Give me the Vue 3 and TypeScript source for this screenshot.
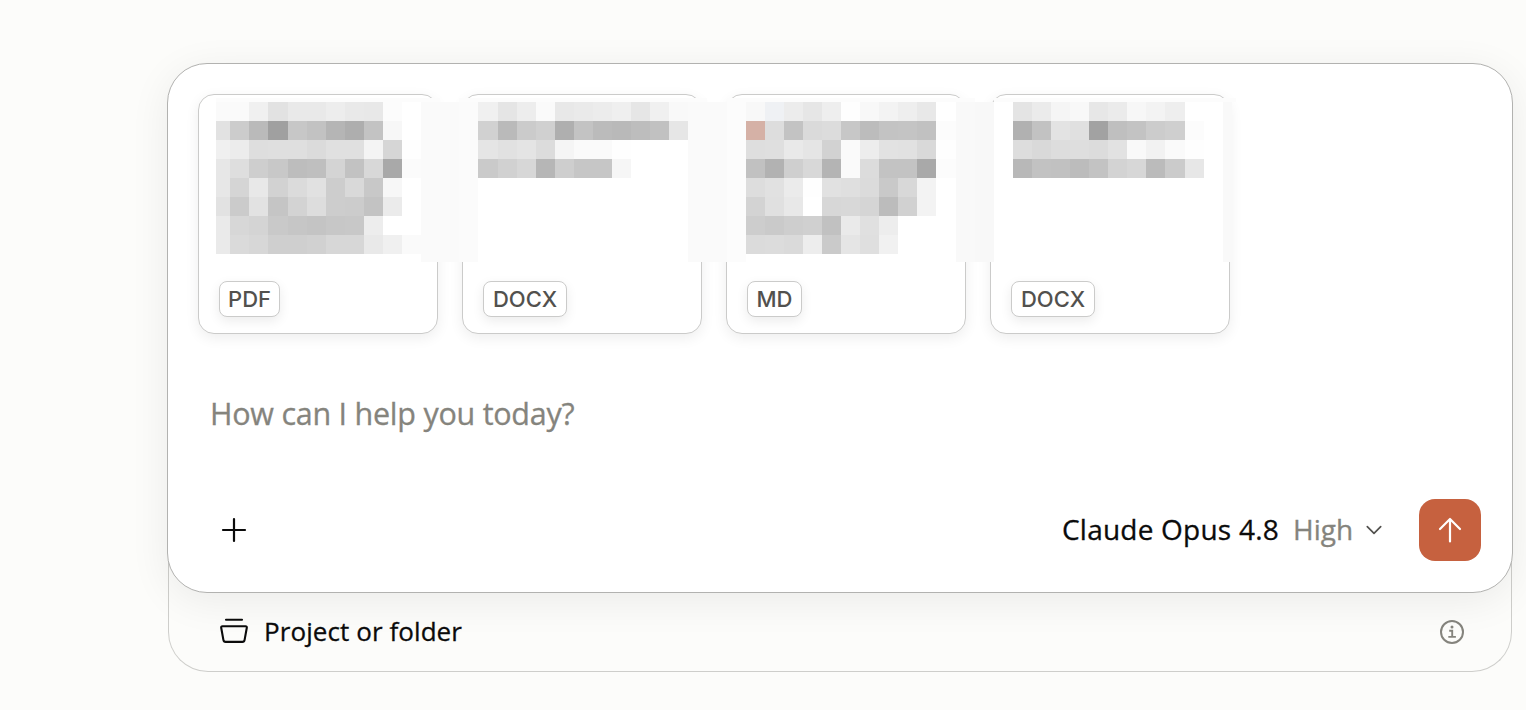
<script setup lang="ts">
interface Mosaic {
  edges: number[]
  rows: string[]
}

interface Cell {
  x: number
  y: number
  w: number
  h: number
  fill: string
}

const attachments: string[] = ['PDF', 'DOCX', 'MD', 'DOCX']

const rowEdges = [4, 23, 42, 61, 80, 99, 118, 137, 156]

const mosaics: Mosaic[] = [
  {
    edges: [18, 32, 51, 70, 90, 109, 128, 147, 166, 185, 204, 223],
    rows: [
      'fa fa f0 e2 e9 e9 ed e9 e8 fc ff',
      'e2 cc ba a0 c7 c2 b5 ae c3 f7 ff',
      'f0 ec de df df db e0 e0 f4 d6 fe',
      'e7 de ce c8 bd bf d4 c2 d8 a9 fb',
      'e7 d5 e8 d2 db e1 cd d9 c8 f7 ff',
      'e2 cb e2 c5 d3 dd cd cc c3 eb ff',
      'ea d7 d4 c9 c6 c4 c7 c8 ed ff ff',
      'ea da d7 cf cf d1 d7 d7 e9 f0 fa',
    ],
  },
  {
    edges: [280, 300, 319, 338, 357, 376, 395, 414, 433, 452, 471, 490],
    rows: [
      'f0 e5 ed fa e8 ea ec ef e6 f0 f9',
      'd1 ba cb d0 af c3 bb b9 bd c1 e6',
      'e5 e1 e4 dc f5 fa fa fe ff ff ff',
      'ca d1 d7 b6 ce c6 c6 f6 ff ff ff',
    ],
  },
  {
    edges: [548, 567, 586, 605, 624, 643, 662, 681, 700, 719, 738, 758],
    rows: [
      'f8 eff1f4 ec e6 ee fe f8 f3 ee e8 ff',
      'd5b1a6 dd c3 da dc c7 bc c3 c4 c1 fc',
      'de df e9 e5 d2 fa ed e2 e1 d9 fe',
      'c1 b2 cf d8 b4 fa dc c3 c3 a9 fc',
      'dd e1 eb fe e1 df db c9 d8 f3 ff',
      'd3 e0 e8 ff d7 d8 d5 bc d1 f3 ff',
      'cd ca ce d0 c1 ea e0 ed ff ff ff',
      'db dc da ed ca e5 df f1 ff ff ff',
    ],
  },
  {
    edges: [815, 834, 853, 872, 891, 910, 929, 948, 967, 987, 1006, 1025],
    rows: [
      'e4 eb f5 f8 e7 eb f7 f3 ee ff ff',
      'b1 c2 e3 e0 a2 bf c3 cc cf fc ff',
      'dd d9 dd de dc e2 f9 f2 fa fe ff',
      'b8 c2 c1 bc c3 d3 d7 bb cb e7 ff',
    ],
  },
]

const bands: Cell[] = [
  { x: 18, y: 0, w: 224, h: 4, fill: '#fcfcfc' },
  { x: 261, y: 0, w: 248, h: 4, fill: '#fcfcfc' },
  { x: 529, y: 0, w: 248, h: 4, fill: '#fcfcfc' },
  { x: 796, y: 0, w: 242, h: 4, fill: '#fcfcfc' },
  { x: 223, y: 4, w: 20, h: 160, fill: '#fafafa' },
  { x: 243, y: 4, w: 18, h: 160, fill: '#fafafa' },
  { x: 261, y: 4, w: 19, h: 160, fill: '#fbfbfb' },
  { x: 490, y: 4, w: 19, h: 160, fill: '#fafafa' },
  { x: 509, y: 4, w: 20, h: 160, fill: '#fafafa' },
  { x: 529, y: 4, w: 19, h: 160, fill: '#fcfcfc' },
  { x: 758, y: 4, w: 19, h: 160, fill: '#f9f9f9' },
  { x: 777, y: 4, w: 19, h: 160, fill: '#f8f8f8' },
  { x: 1025, y: 4, w: 9, h: 160, fill: '#f9f9f9' },
]

const cells: Cell[] = mosaics.flatMap(({ edges, rows }) =>
  rows.flatMap((row, r) =>
    row.split(' ').map((v, c) => ({
      x: edges[c],
      y: rowEdges[r],
      w: edges[c + 1] - edges[c],
      h: rowEdges[r + 1] - rowEdges[r],
      fill: '#' + (v.length === 2 ? v.repeat(3) : v),
    })),
  ),
)
</script>

<template>
  <main class="page">
    <div class="shell">
      <section class="composer">
        <div class="attachments">
          <article v-for="(kind, i) in attachments" :key="i" class="file">
            <span class="tag" :class="kind.toLowerCase()">{{ kind }}</span>
          </article>
          <svg class="redaction" width="1040" height="164" viewBox="0 0 1040 164" shape-rendering="crispEdges" aria-hidden="true">
            <rect v-for="(b, i) in bands" :key="'b' + i" :x="b.x" :y="b.y" :width="b.w" :height="b.h" :fill="b.fill" />
            <rect v-for="(c, i) in cells" :key="'c' + i" :x="c.x" :y="c.y" :width="c.w" :height="c.h" :fill="c.fill" />
          </svg>
        </div>
        <p class="prompt">How can I help you today?</p>
        <div class="toolbar">
          <button class="plain" aria-label="Add">
            <svg width="26" height="26" viewBox="0 0 26 26" fill="none" stroke="#0b0b0b" stroke-width="2.2" stroke-linecap="round">
              <path d="M13 2v22M2 13h22" />
            </svg>
          </button>
          <div class="model">
            <span class="name">Claude Opus 4.8</span>
            <span class="effort">High</span>
            <svg class="chevron" width="18" height="12" viewBox="0 0 18 12" fill="none" stroke="#52514e" stroke-width="1.7" stroke-linecap="round" stroke-linejoin="round">
              <path d="M2.300 2.700 9 9.300 15.700 2.700" />
            </svg>
          </div>
          <button class="send" aria-label="Send">
            <svg width="26" height="28" viewBox="0 0 26 28" fill="none" stroke="#fff" stroke-width="2.2" stroke-linecap="round" stroke-linejoin="round">
              <path d="M13 25.5V3M3 13 13 3l10 10" />
            </svg>
          </button>
        </div>
      </section>
      <footer class="project">
        <svg class="basket" width="30" height="28" viewBox="0 0 30 28" fill="none" stroke="#0b0b0b" stroke-width="2.1" stroke-linecap="round" stroke-linejoin="round">
          <path d="M7 2.8h16" />
          <path d="M3.5 9.2h23q1.6 0 1.3 1.5l-2.2 12.2q-.3 2-2.2 2H6.6q-1.900 0-2.200-2L2.200 10.700q-.3-1.500 1.300-1.500z" />
        </svg>
        <span class="label">Project or folder</span>
        <svg class="info" width="26" height="26" viewBox="0 0 26 26" fill="none" stroke="#85847d" stroke-width="2">
          <circle cx="13" cy="13" r="11" />
          <path d="M10.200 11.700h3v6.100M9.300 17.900h7.600" stroke-width="1.900" />
          <circle cx="13" cy="7.900" r="1.500" fill="#85847d" stroke="none" />
        </svg>
      </footer>
    </div>
  </main>
</template>

<style>
body {
  margin: 0;
  background: #fcfcfa;
}
</style>

<style scoped>
.page {
  box-sizing: border-box;
  width: 1526px;
  height: 710px;
  padding: 63px 13px 0 167px;
  overflow: hidden;
  background: #fcfcfa;
  font-family: "Open Sans", "Noto Sans", sans-serif;
}
.shell {
  width: 1346px;
}
.composer {
  box-sizing: border-box;
  position: relative;
  z-index: 1;
  height: 530px;
  padding: 30px 31px 31px 30px;
  display: flex;
  flex-direction: column;
  border: 1px solid #b2b2b0;
  border-radius: 40px;
  background: #fff;
  box-shadow: 0 8px 40px rgba(0, 0, 0, 0.07);
}
.attachments {
  position: relative;
  display: flex;
  gap: 24px;
}
.file {
  box-sizing: border-box;
  width: 240px;
  height: 240px;
  padding: 0 20px 16px;
  display: flex;
  align-items: flex-end;
  border: 1px solid #cbcbca;
  border-radius: 16px;
  background: #fff;
  box-shadow: 0 4px 14px rgba(0, 0, 0, 0.07);
}
.tag {
  box-sizing: border-box;
  height: 36px;
  width: 84px;
  display: flex;
  align-items: center;
  justify-content: center;
  border: 1px solid #cbcbca;
  border-radius: 8px;
  background: #fff;
  box-shadow: 0 4px 12px rgba(0, 0, 0, 0.08);
  color: #52514e;
  font-family: Inter, "Open Sans", sans-serif;
  font-size: 22px;
  font-weight: 500;
  line-height: 34px;
}
.tag.pdf {
  width: 61px;
}
.tag.md {
  width: 55px;
}
.redaction {
  position: absolute;
  left: 0;
  top: 4px;
}
.prompt {
  margin: 57px 0 0 12px;
  height: 44px;
  color: #85847d;
  font-size: 30.5px;
  line-height: 44px;
  letter-spacing: -0.25px;
  white-space: nowrap;
  -webkit-text-stroke: 0.3px #85847d;
}
.toolbar {
  margin-top: auto;
  height: 62px;
  display: flex;
  align-items: center;
}
.plain {
  width: 26px;
  height: 26px;
  margin: 0 0 0 23px;
  padding: 0;
  border: 0;
  background: none;
}
.plain svg,
.send svg {
  display: block;
}
.model {
  margin-left: auto;
  display: flex;
  align-items: center;
  font-size: 28px;
  line-height: 40px;
  white-space: nowrap;
}
.name,
.effort {
  margin-top: -2px;
}
.name {
  width: 231px;
  color: #0b0b0b;
  font-weight: 500;
  letter-spacing: 0.22px;
  -webkit-text-stroke: 0.3px #0b0b0b;
}
.effort {
  width: 72px;
  color: #85847d;
  -webkit-text-stroke: 0.3px #85847d;
}
.chevron {
  margin-right: 36px;
}
.send {
  width: 62px;
  height: 62px;
  padding: 0;
  display: flex;
  align-items: center;
  justify-content: center;
  border: 0;
  border-radius: 16px;
  background: #c6613f;
}
.project {
  box-sizing: border-box;
  height: 119px;
  margin: -40px 1px 0;
  padding: 40px 46px 0 50px;
  display: flex;
  align-items: center;
  border: 1px solid #cececb;
  border-top: 0;
  border-radius: 0 0 40px 40px;
}
.basket {
  margin-top: -2px;
}
.label {
  margin: -2px 0 0 15px;
  color: #0b0b0b;
  font-size: 26px;
  line-height: 36px;
  letter-spacing: 0.08px;
  -webkit-text-stroke: 0.3px #0b0b0b;
}
.info {
  margin-left: auto;
}
</style>
